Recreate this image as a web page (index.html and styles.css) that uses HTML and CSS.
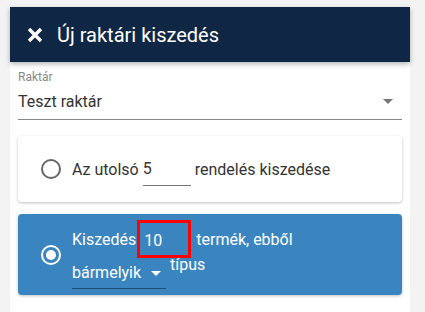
FILE: index.html
```html
<!DOCTYPE html>
<html>
<head>
    <title>Új raktári kiszedés</title>
    <link rel="stylesheet" href="styles.css">
</head>
<body>
    <div class="dialog">
        <div class="dialog-header">
            <svg class="close-icon" width="16" height="16" viewBox="0 0 16 16">
                <path d="M2 2 L14 14 M14 2 L2 14" stroke="#fff" stroke-width="3.4" fill="none"/>
            </svg>
            <span class="dialog-title">Új raktári kiszedés</span>
        </div>
        <div class="dialog-body">
            <div class="field">
                <label class="field-label">Raktár</label>
                <div class="select-line">
                    <span>Teszt raktár</span>
                    <span class="caret caret-grey"></span>
                </div>
            </div>

            <div class="card">
                <span class="radio"></span>
                <div class="card-text">
                    <span>Az utolsó</span>
                    <span class="num-input">5</span>
                    <span>rendelés kiszedése</span>
                </div>
            </div>

            <div class="card card-active">
                <span class="radio radio-checked"></span>
                <div class="card-lines">
                    <div class="line">
                        <span>Kiszedés</span>
                        <span class="marked"><span class="num-input num-plain">10</span></span>
                        <span>termék, ebből</span>
                    </div>
                    <div class="line line-second">
                        <span class="type-select">bármelyik <span class="caret caret-white"></span></span>
                        <span class="type-label">típus</span>
                    </div>
                </div>
            </div>
        </div>
    </div>
</body>
</html>
```

FILE: styles.css
```css
/* page */
body {
    margin: 0;
    background-color: #f3f3f3;
    font-family: Roboto, "Liberation Sans", Arial, sans-serif;
    color: #333;
}

.dialog {
    margin: 7px 0 0 10px;
    width: 400px;
    height: 305px;
    background-color: #fff;
}

/* header */
.dialog-header {
    height: 55px;
    display: flex;
    align-items: center;
    padding-left: 17px;
    background-color: #0f2744;
    box-shadow: 0 2px 5px rgba(0, 0, 0, 0.3);
    position: relative;
}

.close-icon {
    margin-right: 14px;
}

.dialog-title {
    color: #fff;
    font-size: 20px;
}

/* body */
.dialog-body {
    padding: 0 8px;
}

.field {
    padding-top: 8px;
}

.field-label {
    display: block;
    font-size: 12px;
    color: #888;
    line-height: 14px;
}

.select-line {
    display: flex;
    justify-content: space-between;
    align-items: center;
    height: 35px;
    font-size: 16px;
    border-bottom: 1px solid #888;
}

.caret {
    display: inline-block;
    width: 0;
    height: 0;
    border-left: 5px solid transparent;
    border-right: 5px solid transparent;
}

.caret-grey {
    border-top: 5px solid #777;
    margin-right: 9px;
}

.caret-white {
    border-top: 5px solid #fff;
    margin-left: 6px;
    vertical-align: middle;
}

/* option cards */
.card {
    margin-top: 16px;
    height: 66px;
    display: flex;
    align-items: center;
    border-radius: 4px;
    background-color: #fff;
    box-shadow: 0 1px 3px rgba(0, 0, 0, 0.25);
    font-size: 16px;
}

.radio {
    box-sizing: border-box;
    width: 20px;
    height: 20px;
    margin: 0 11px 0 23px;
    border: 2px solid #666;
    border-radius: 50%;
    flex-shrink: 0;
}

.card-text {
    display: flex;
    align-items: center;
}

.num-input {
    display: inline-block;
    width: 48px;
    margin: 0 4px;
    padding: 6px 0 7px;
    border-bottom: 1px solid #777;
}

.card-active {
    margin-top: 12px;
    height: 81px;
    background-color: #3a85bf;
    color: #fff;
}

.radio-checked {
    border-color: #fff;
    position: relative;
}

.radio-checked::after {
    content: "";
    position: absolute;
    left: 3px;
    top: 3px;
    width: 10px;
    height: 10px;
    border-radius: 50%;
    background-color: #fff;
}

.card-lines {
    align-self: stretch;
    padding-top: 6px;
}

.line {
    display: flex;
    align-items: center;
    height: 38px;
}

.marked {
    display: inline-block;
    box-sizing: border-box;
    width: 54px;
    height: 38px;
    margin-left: 1px;
    padding: 8px 0 0 4px;
    border: 3px solid #f00;
}

.num-plain {
    width: auto;
    margin: 0;
    padding: 0;
    border: none;
}

.marked + span {
    margin-left: 5px;
}

.line-second {
    height: 34px;
    align-items: flex-start;
}

.type-select {
    display: inline-block;
    width: 94px;
    padding-top: 5px;
    height: 25px;
    border-bottom: 1px solid #1f4f73;
}

.type-label {
    margin-left: 4px;
    margin-top: -3px;
}
```
